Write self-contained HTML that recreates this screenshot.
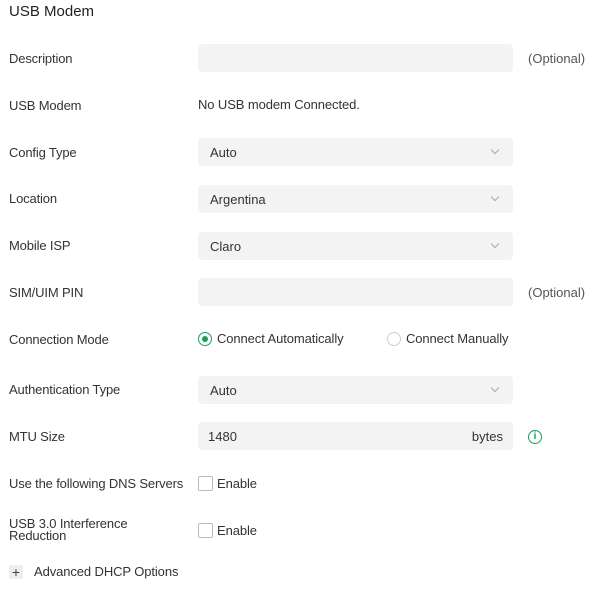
<!DOCTYPE html>
<html><head><meta charset="utf-8"><style>
body{margin:0;width:605px;height:591px;background:#fff;font-family:"Liberation Sans",sans-serif;color:#333;position:relative;overflow:hidden}
.a{position:absolute;white-space:nowrap}
.t{left:9px;top:3px;font-size:15px;color:#222}
.l{left:9px;font-size:13px;color:#333;line-height:13px;letter-spacing:-0.15px}
.in{position:absolute;left:198px;width:315px;height:28px;background:#f3f3f3;border-radius:4px;font-size:13px;line-height:29px;color:#333}
.in span{position:absolute;left:12px}
.chev{position:absolute;right:15px;top:9px;width:5px;height:5px;border-right:1px solid #aaa;border-bottom:1px solid #aaa;transform:rotate(45deg)}
.v{font-size:13px;color:#333;line-height:13px;letter-spacing:-0.1px}
.opt{left:528px;font-size:13px;color:#555;line-height:13px}
.cb{position:absolute;left:198px;width:13px;height:13px;border:1px solid #bbb;border-radius:2px}
</style></head><body>
<div class="a t">USB Modem</div>

<div class="a l" style="top:52px">Description</div>
<div class="in" style="top:44px"></div>
<div class="a opt" style="top:52px">(Optional)</div>

<div class="a l" style="top:99px">USB Modem</div>
<div class="a v" style="left:198px;top:98px">No USB modem Connected.</div>

<div class="a l" style="top:146px">Config Type</div>
<div class="in" style="top:138px"><span>Auto</span><i class="chev"></i></div>

<div class="a l" style="top:192px">Location</div>
<div class="in" style="top:185px"><span>Argentina</span><i class="chev"></i></div>

<div class="a l" style="top:239px">Mobile ISP</div>
<div class="in" style="top:232px"><span>Claro</span><i class="chev"></i></div>

<div class="a l" style="top:286px">SIM/UIM PIN</div>
<div class="in" style="top:278px"></div>
<div class="a opt" style="top:286px">(Optional)</div>

<div class="a l" style="top:333px">Connection Mode</div>
<div class="a" style="left:198px;top:332px;width:12px;height:12px;border:1px solid #1a9e5c;border-radius:50%"><div style="position:absolute;left:3px;top:3px;width:6px;height:6px;background:#1a9e5c;border-radius:50%"></div></div>
<div class="a v" style="left:217px;top:332px">Connect Automatically</div>
<div class="a" style="left:387px;top:332px;width:12px;height:12px;border:1px solid #ccc;border-radius:50%"></div>
<div class="a v" style="left:406px;top:332px">Connect Manually</div>

<div class="a l" style="top:383px">Authentication Type</div>
<div class="in" style="top:376px"><span>Auto</span><i class="chev"></i></div>

<div class="a l" style="top:430px">MTU Size</div>
<div class="in" style="top:422px"><span style="left:10px">1480</span><span style="left:auto;right:10px">bytes</span></div>
<div class="a" style="left:528px;top:430px;width:12px;height:12px;border:1.5px solid #1a9e5c;border-radius:50%;color:#1a9e5c;font-size:10px;line-height:12px;text-align:center;font-weight:bold">i</div>

<div class="a l" style="top:477px">Use the following DNS Servers</div>
<div class="cb" style="top:476px"></div>
<div class="a v" style="left:217px;top:477px">Enable</div>

<div class="a l" style="top:518px;line-height:12px">USB 3.0 Interference<br>Reduction</div>
<div class="cb" style="top:523px"></div>
<div class="a v" style="left:217px;top:524px">Enable</div>

<div class="a" style="left:9px;top:565px;width:14px;height:14px;background:#eee;border-radius:2px;text-align:center;line-height:14px;font-size:14px;color:#444">+</div>
<div class="a v" style="left:34px;top:565px">Advanced DHCP Options</div>
</body></html>
